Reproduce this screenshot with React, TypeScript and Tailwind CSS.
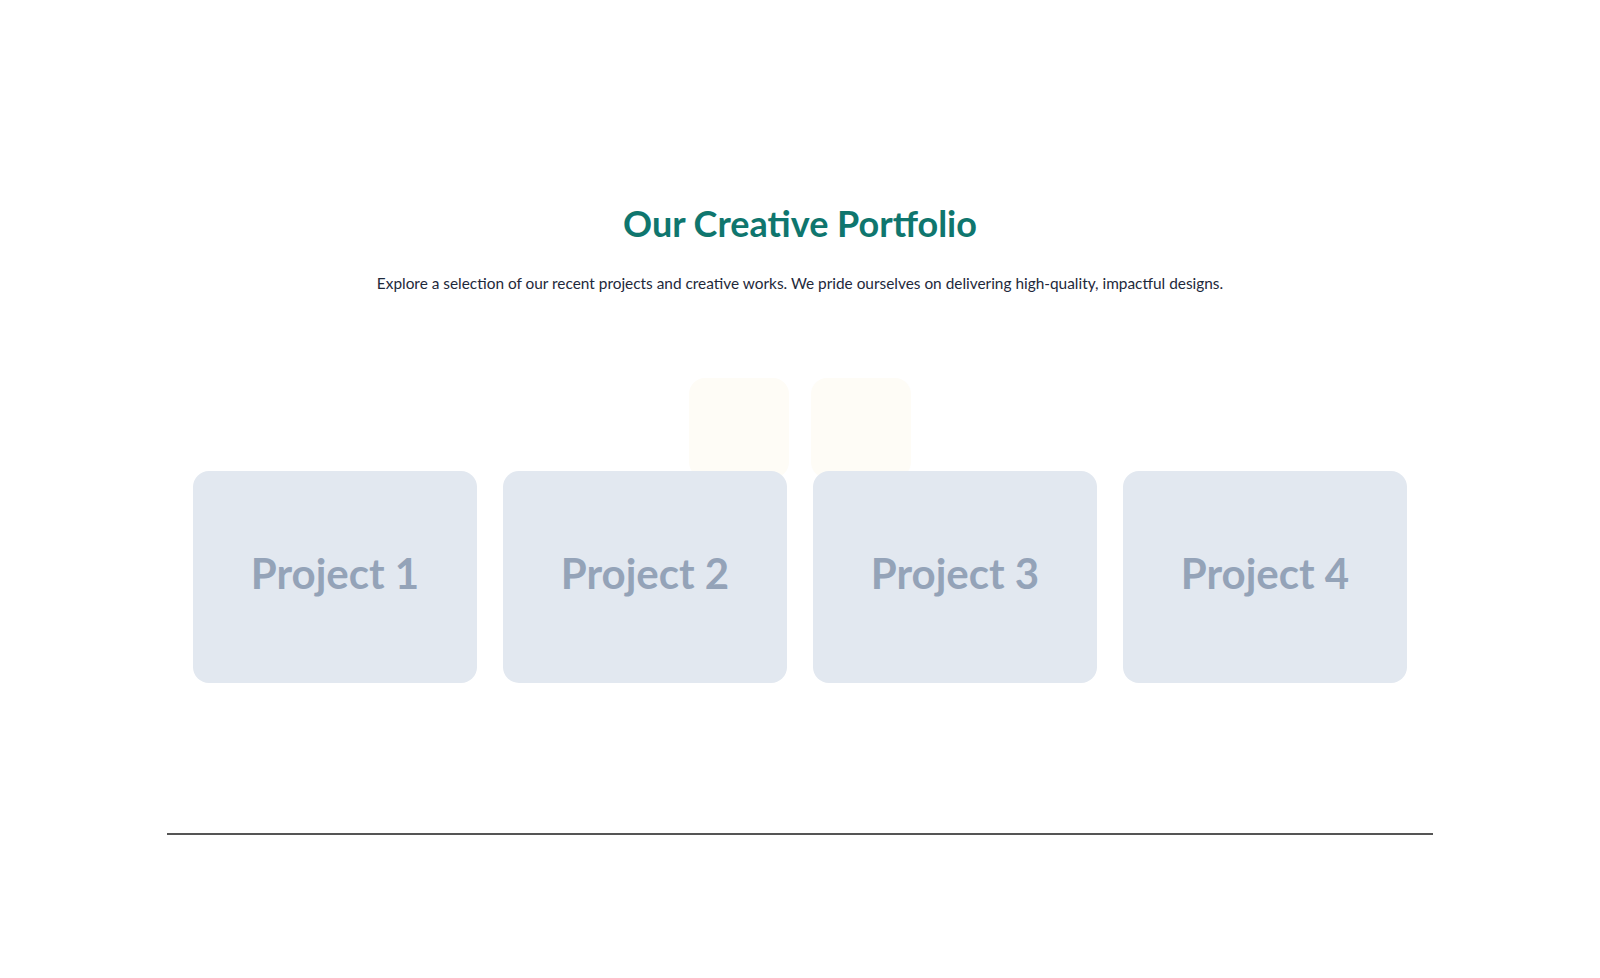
import React from "react";

const projects = ["Project 1", "Project 2", "Project 3", "Project 4"];

const App = () => {
  return (
    <div className="min-h-screen bg-white font-['Lato',sans-serif]">
      <section className="pt-[203px] text-center">
        <h2 className="text-[36px] leading-[40px] font-bold text-[#0f766e]">
          Our Creative Portfolio
        </h2>
        <p className="mt-[28px] text-[15.4px] leading-6 text-[#1e293b]">
          Explore a selection of our recent projects and creative works. We pride ourselves on delivering high-quality, impactful designs.
        </p>

        {/* floating accents + cards */}
        <div className="relative mx-auto mt-[83px] w-[1214px] pt-[93px]">
          <div className="absolute top-0 left-[496px] h-[100px] w-[100px] rounded-2xl bg-[#fefcf6]"></div>
          <div className="absolute top-0 left-[618px] h-[100px] w-[100px] rounded-2xl bg-[#fefcf6]"></div>
          <div className="relative grid grid-cols-4 gap-[26px]">
            {projects.map((p) => (
              <div
                key={p}
                className="flex h-[212px] items-center justify-center rounded-2xl bg-[#e2e8f0] pb-2"
              >
                <span className="text-[42px] font-bold text-[#94a3b8]">{p}</span>
              </div>
            ))}
          </div>
        </div>
      </section>

      <hr className="mx-auto mt-[150px] w-[1266px] border-t-2 border-[#555555]" />
    </div>
  );
};

export default App;
